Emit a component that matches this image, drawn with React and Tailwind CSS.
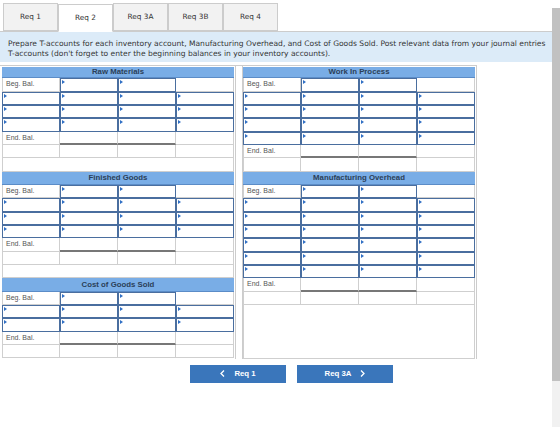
import React from "react";

const ROW = "h-[13.33px]";

function Marker() {
  return (
    <span className="absolute left-[1px] top-[1px] h-0 w-0 border-y-[2px] border-l-[3px] border-y-transparent border-l-[#2f6fc4]" />
  );
}

function InputCell() {
  return (
    <div className="relative h-full border border-[#4a6e9f] bg-white">
      <Marker />
    </div>
  );
}

function Plain({ total }) {
  return (
    <div
      className={
        "h-full border-r border-b border-[#cfcfcf] bg-white " +
        (total ? "border-b-2 border-b-[#777777]" : "")
      }
    />
  );
}

function Label({ text }) {
  return (
    <div className="h-full border-x border-b border-[#cfcfcf] bg-white pl-[3px] text-[7px] leading-[11px] text-[#555555] font-['Liberation_Sans',Arial,sans-serif]">
      {text}
    </div>
  );
}

function Header({ title, first }) {
  return (
    <div
      className={
        (first ? "mt-[1px] h-[11.33px] " : "h-[13.33px] ") +
        "flex items-center justify-center border-b border-[#5b8cc7] bg-[#79ade6] text-[7.8px] font-bold text-[#2b3f58] font-['Liberation_Sans',Arial,sans-serif]"
      }
    >
      {title}
    </div>
  );
}

function TAccount({ title, inputs, spacer, first }) {
  return (
    <div className="flex flex-col">
      <Header title={title} first={first} />
      <div className={"grid grid-cols-4 " + ROW}>
        <Label text="Beg. Bal." />
        <InputCell />
        <InputCell />
        <Plain />
      </div>
      {Array.from({ length: inputs }).map((_, i) => (
        <div key={i} className={"grid grid-cols-4 " + ROW}>
          <InputCell />
          <InputCell />
          <InputCell />
          <InputCell />
        </div>
      ))}
      <div className={"grid grid-cols-4 " + ROW}>
        <Label text="End. Bal." />
        <Plain total />
        <Plain total />
        <Plain />
      </div>
      <div className={"grid grid-cols-4 " + ROW}>
        <div className="h-full border-x border-b border-[#cfcfcf]" />
        <Plain />
        <Plain />
        <Plain />
      </div>
      {spacer && <div className={"border-x border-b border-[#cfcfcf] " + ROW} />}
    </div>
  );
}

function Tab({ label, active }) {
  return (
    <div
      className={
        "flex h-[28px] w-[55px] items-center justify-center border border-[#cccccc] text-[7.3px] text-[#333333] " +
        (active ? "-mb-px border-b-white bg-white" : "bg-[#f2f2f2]")
      }
    >
      {label}
    </div>
  );
}

export default function App() {
  return (
    <div className="flex h-[427px] w-[560px] overflow-hidden bg-white font-['DejaVu_Sans',Verdana,sans-serif]">
      <div className="flex w-[552px] flex-col">
        <div className="flex items-end border-b border-[#cccccc] pl-[3px] pt-[3px]">
          <Tab label="Req 1" />
          <Tab label="Req 2" active />
          <Tab label="Req 3A" />
          <Tab label="Req 3B" />
          <Tab label="Req 4" />
        </div>
        <div className="h-[30px] bg-[#dcebf8] px-[8px] pt-[7px] text-[7.55px] leading-[9.5px] text-[#333333]">
          <div className="whitespace-nowrap">
            Prepare T-accounts for each inventory account, Manufacturing Overhead, and Cost of Goods Sold. Post relevant data from your journal entries
          </div>
          <div className="whitespace-nowrap">
            T-accounts (don't forget to enter the beginning balances in your inventory accounts).
          </div>
        </div>
        <div className="mt-[3px] flex w-[477px] border-t border-[#cccccc]">
          <div className="w-[236px] border-r border-[#cccccc] pl-[2px] pr-[1px]">
            <div className="w-[232px]">
              <TAccount title="Raw Materials" inputs={3} spacer first />
              <TAccount title="Finished Goods" inputs={3} spacer />
              <TAccount title="Cost of Goods Sold" inputs={2} />
            </div>
          </div>
          <div className="ml-[6px] w-[235px] border-x border-[#cccccc]">
            <div className="flex h-full w-[232px] flex-col">
              <TAccount title="Work In Process" inputs={4} first />
              <TAccount title="Manufacturing Overhead" inputs={6} />
              <div className="h-[54px] border-x border-b border-[#cfcfcf]" />
            </div>
          </div>
        </div>
        <div className="mt-[6px] flex gap-[11px] pl-[190px]">
          <button className="flex h-[18px] w-[96px] items-center justify-center gap-[9px] bg-[#3a76bb] text-[7.8px] font-bold text-white font-['Liberation_Sans',Arial,sans-serif]">
            <svg width="5" height="7" viewBox="0 0 5 7">
              <polyline points="4,0.5 1,3.5 4,6.5" fill="none" stroke="white" strokeWidth="1.3" />
            </svg>
            <span>Req 1</span>
          </button>
          <button className="flex h-[18px] w-[96px] items-center justify-center gap-[9px] bg-[#3a76bb] text-[7.8px] font-bold text-white font-['Liberation_Sans',Arial,sans-serif]">
            <span>Req 3A</span>
            <svg width="5" height="7" viewBox="0 0 5 7">
              <polyline points="1,0.5 4,3.5 1,6.5" fill="none" stroke="white" strokeWidth="1.3" />
            </svg>
          </button>
        </div>
      </div>
      <div className="flex w-[8px] flex-col">
        <div className="h-[8px] bg-white" />
        <div className="h-[373px] bg-[#c1c1c1]" />
        <div className="flex-1 bg-[#f1f1f1]" />
      </div>
    </div>
  );
}
